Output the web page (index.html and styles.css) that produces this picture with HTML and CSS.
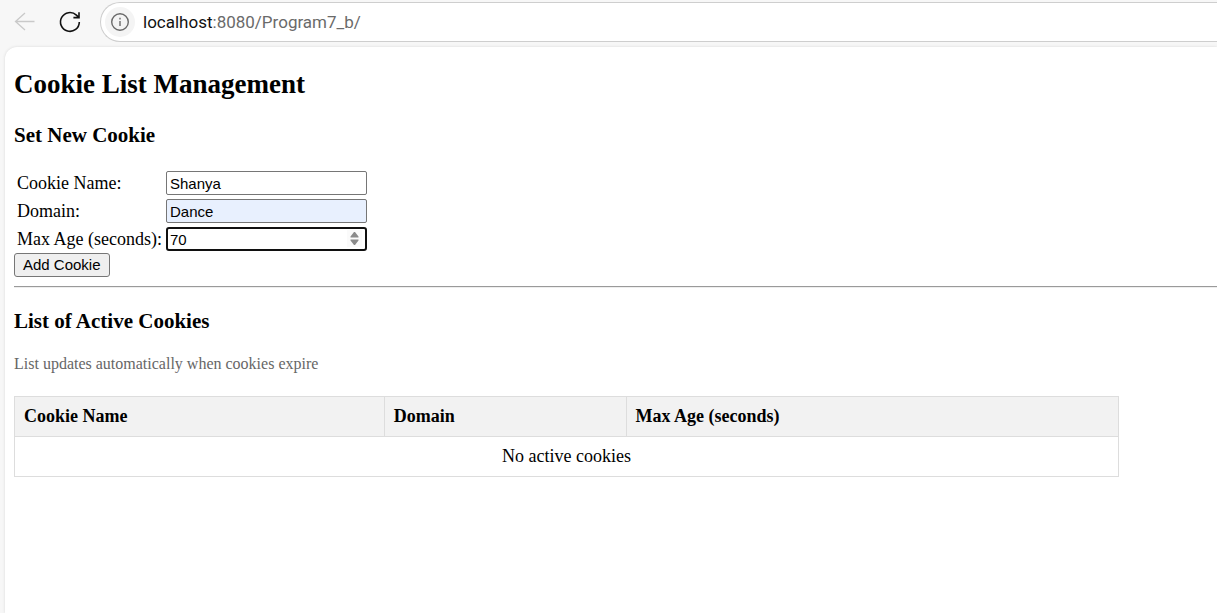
FILE: index.html
```html
<!DOCTYPE html>
<html lang="en">
<head>
<meta charset="utf-8">
<title>Cookie List Management</title>
<link rel="stylesheet" href="styles.css">
</head>
<body>
<header class="toolbar">
  <button class="nav-button" type="button" aria-label="Back" disabled>
    <svg width="24" height="24" viewBox="0 0 24 24" fill="none" stroke="#c9c9c9" stroke-width="1.3"><path d="M22.500 11.500H3.500M13 3L3.500 11.500L13 20"/></svg>
  </button>
  <button class="nav-button" type="button" aria-label="Reload">
    <svg width="24" height="24" viewBox="0 0 24 24" fill="none" stroke="#111" stroke-width="1.6"><path d="M21.300 12a9.400 9.400 0 1 1-2.900-6.800L20.800 7.400M21 2.200v5.400h-5.600"/></svg>
  </button>
  <div class="address">
    <button class="site-info" type="button" aria-label="Site information">
      <svg width="20" height="20" viewBox="0 0 20 20" fill="none" stroke="#6a6a6a" stroke-width="1.4"><circle cx="10" cy="10" r="8.3"/><path d="M10 9v5M10 5.8v1.6"/></svg>
    </button>
    <span class="url"><span class="host">localhost</span>:8080/Program7_b/</span>
  </div>
</header>
<main class="page">
  <h2 class="title">Cookie List Management</h2>
  <h3 class="heading">Set New Cookie</h3>
  <form class="cookie-form">
    <div class="fields">
      <label for="name">Cookie Name:</label>
      <input class="field" id="name" type="text" value="Shanya">
      <label for="domain">Domain:</label>
      <input class="field filled" id="domain" type="text" value="Dance">
      <label for="age">Max Age (seconds):</label>
      <div class="number">
        <input class="field focused" id="age" type="number" value="70">
        <svg class="spinner" width="15" height="17" viewBox="0 0 15 17"><path fill="#fafafa" d="M0 0h15v17H0z"/><path fill="#8a8a8a" d="M3.5 7.5v-1L7 2h1l3.500 4.500v1zM3.500 9.500v1L7 15h1l3.500-4.500v-1z"/></svg>
      </div>
    </div>
    <button class="submit" type="button">Add Cookie</button>
  </form>
  <hr class="rule">
  <h3 class="heading">List of Active Cookies</h3>
  <p class="note">List updates automatically when cookies expire</p>
  <table class="cookies">
    <thead>
      <tr><th class="col-name">Cookie Name</th><th class="col-domain">Domain</th><th>Max Age (seconds)</th></tr>
    </thead>
    <tbody>
      <tr><td colspan="3">No active cookies</td></tr>
    </tbody>
  </table>
</main>
</body>
</html>
```
FILE: styles.css
```css
* {
  box-sizing: border-box;
}

body {
  margin: 0;
  min-height: 100vh;
  display: flex;
  flex-direction: column;
  background: #f7f7f7;
  color: #000;
  font-family: "Liberation Serif", "Times New Roman", serif;
  font-size: 18px;
  line-height: 20px;
}

.toolbar {
  display: flex;
  align-items: center;
  padding: 2px 0 5px 12px;
}

.nav-button {
  display: flex;
  margin-right: 22px;
  padding: 0;
  border: 0;
  background: none;
}

.nav-button + .nav-button {
  margin-right: 18px;
}

.address {
  flex: 1;
  display: flex;
  align-items: center;
  gap: 8px;
  height: 40px;
  padding-left: 4px;
  border: 1px solid #cecece;
  border-right: 0;
  border-radius: 20px 0 0 20px;
  background: #fff;
}

.site-info {
  display: flex;
  padding: 5px;
  border: 0;
  border-radius: 50%;
  background: #f4f4f4;
}

.url {
  color: #6a6a6a;
  font-family: Roboto, sans-serif;
  font-size: 17px;
}

.host {
  color: #111;
}

.page {
  flex: 1;
  margin-left: 5px;
  padding: 22px 0 16px 9px;
  border-radius: 12px 0 0 0;
  background: #fff;
  box-shadow: 0 0 3px #d8d8d8;
}

.title {
  margin: 0 0 24px;
  font-size: 27px;
  line-height: 30px;
}

.heading {
  margin: 0;
  font-size: 21px;
  line-height: 24px;
}

.fields {
  display: grid;
  grid-template-columns: 145px 201px;
  align-items: center;
  gap: 4px;
  padding: 24px 3px 2px;
}

.field {
  display: block;
  width: 100%;
  height: 24px;
  padding: 1px 3px;
  border: 1px solid #767676;
  border-radius: 2px;
  background: #fff;
  color: #000;
  font-family: "Liberation Sans", Arial, sans-serif;
  font-size: 15px;
}

.filled {
  background: #e8f0fe;
}

.focused {
  padding: 0 2px;
  border: 2px solid #101010;
  border-radius: 3px;
  appearance: textfield;
}

.focused::-webkit-inner-spin-button {
  appearance: none;
}

.number {
  position: relative;
}

.spinner {
  position: absolute;
  top: 3px;
  right: 5px;
}

.submit {
  display: block;
  height: 24px;
  padding: 0 8px 2px;
  border: 1px solid #767676;
  border-radius: 3px;
  background: #efefef;
  color: #000;
  font-family: "Liberation Sans", Arial, sans-serif;
  font-size: 15px;
}

.rule {
  margin: 9px 0 21px;
  border: 0;
  border-top: 1px solid #9a9a9a;
  border-bottom: 1px solid #eee;
}

.note {
  margin: 21px 0 22px;
  color: #666;
  font-size: 16px;
}

.cookies {
  width: calc(100% - 98px);
  border-collapse: collapse;
  table-layout: fixed;
}

.cookies th,
.cookies td {
  padding: 9px 9px 10px;
  border: 1px solid #ddd;
}

.cookies th {
  background: #f2f2f2;
  text-align: left;
}

.cookies td {
  text-align: center;
}

.col-name {
  width: 33.5%;
}

.col-domain {
  width: 21.9%;
}
```
